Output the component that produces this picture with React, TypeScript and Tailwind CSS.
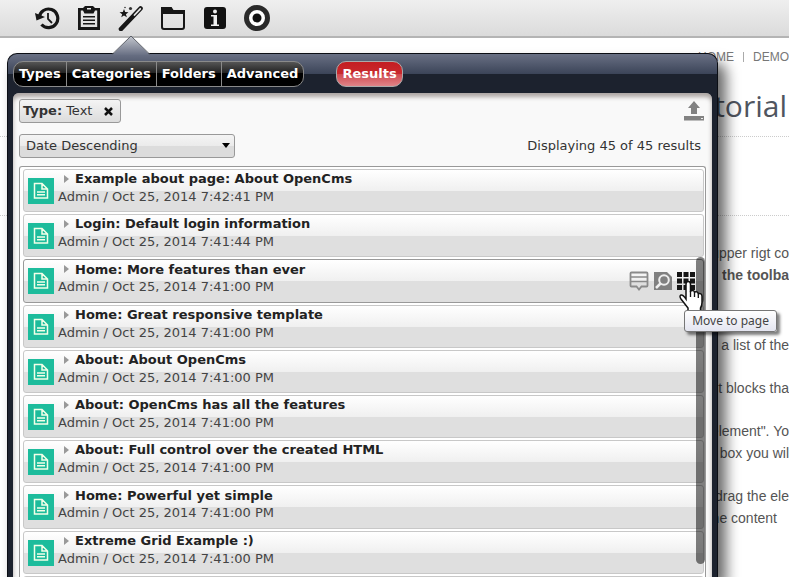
import React from "react";

type Entry = { title: string; date: string; active?: boolean };

const entries: Entry[] = [
  { title: "Example about page: About OpenCms", date: "Oct 25, 2014 7:42:41 PM" },
  { title: "Login: Default login information", date: "Oct 25, 2014 7:41:44 PM" },
  { title: "Home: More features than ever", date: "Oct 25, 2014 7:41:00 PM", active: true },
  { title: "Home: Great responsive template", date: "Oct 25, 2014 7:41:00 PM" },
  { title: "About: About OpenCms", date: "Oct 25, 2014 7:41:00 PM" },
  { title: "About: OpenCms has all the features", date: "Oct 25, 2014 7:41:00 PM" },
  { title: "About: Full control over the created HTML", date: "Oct 25, 2014 7:41:00 PM" },
  { title: "Home: Powerful yet simple", date: "Oct 25, 2014 7:41:00 PM" },
  { title: "Extreme Grid Example :)", date: "Oct 25, 2014 7:41:00 PM" },
];

const toolClass = "flex size-7 items-center justify-center";

function Toolbar() {
  return (
    <header className="flex h-[38px] items-center gap-[14px] border-b-2 border-[#b4b4b4] bg-linear-to-b from-[#efefef] to-[#dbdbdb] pl-[33px]">
      <button aria-label="History" className={toolClass}>
        <svg width="26" height="26" viewBox="0 0 26 26" fill="none" stroke="#171717">
          <path d="M5.2 12.500A9.300 9.300 0 1 1 7.500 19.500" strokeWidth="3.200" />
          <path d="M1 8l1.500 7.500 8.500-3.500z" fill="#171717" stroke="none" />
          <path d="M14 8v6l4 4" strokeWidth="1.800" />
        </svg>
      </button>
      <button aria-label="Clipboard" className={toolClass}>
        <svg width="26" height="26" viewBox="0 0 26 26" fill="#171717">
          <path
            fillRule="evenodd"
            d="M2 3h5l2-2h8l2 2h5v22H2zM4.800 5.500v16.500h16.400V5.500H19L17.500 8.500h-9L7 5.500zM11 3v1.500h4V3z"
          />
          <path d="M7 11h12v1.500H7zM7 14.500h12V16H7zM7 18h12v1.500H7z" />
        </svg>
      </button>
      <button aria-label="Add content" className={toolClass}>
        <svg width="26" height="26" viewBox="0 0 26 26">
          <path d="M3 24L22.500 3.500" stroke="#171717" strokeWidth="4.600" strokeLinecap="round" />
          <path d="M16.500 10L22.300 3.800" stroke="#e4e4e4" strokeWidth="1.800" strokeLinecap="round" />
          <path d="M6 4l1.200 3 3.300.2-2.600 2 1 3.100L6 10.500l-2.800 1.800 1-3.100-2.700-2 3.300-.2z" fill="#171717" />
          <circle cx="12.500" cy="3.500" r="1.600" fill="#333" />
          <circle cx="7" cy="2.500" r=".8" fill="#333" />
        </svg>
      </button>
      <button aria-label="Folders" className={toolClass}>
        <svg width="26" height="26" viewBox="0 0 26 26" fill="none">
          <path d="M2 22V3h9l2 3h11v16q0 2-2 2H4q-2 0-2-2z" stroke="#171717" strokeWidth="2" />
          <path d="M2 2h9l2 4h11v3H2z" fill="#171717" />
        </svg>
      </button>
      <button aria-label="Information" className={toolClass}>
        <svg width="24" height="24" viewBox="0 0 24 24">
          <rect x="1" y="1" width="22" height="22" rx="3" fill="#111" />
          <circle cx="12" cy="5.500" r="2" fill="#eee" />
          <path d="M8 9h6v9.500h2V20H8v-1.500h2.500v-8H8z" fill="#eee" />
        </svg>
      </button>
      <button aria-label="Publish" className={toolClass}>
        <svg width="28" height="28" viewBox="0 0 28 28">
          <circle cx="14" cy="14" r="10.500" fill="#fff" stroke="#2a2a2a" strokeWidth="5" />
          <circle cx="14" cy="14" r="4.500" fill="#111" />
        </svg>
      </button>
    </header>
  );
}

function EntryRow({ entry }: { entry: Entry }) {
  return (
    <li
      className={`mb-[2px] flex rounded-[3px] border bg-[linear-gradient(#fff,#f0f0f0_50%,#dfdfdf_50%,#dfdfdf)] pl-1 ${
        entry.active ? "border-[#999]" : "border-[#c8c8c8]"
      }`}
    >
      <span className="mt-2 flex size-[26px] shrink-0 items-center justify-center bg-[#1dbc9c]">
        <svg width="16" height="18" viewBox="0 0 16 18" fill="none" stroke="#f4ffe8" strokeWidth="1.500">
          <path d="M1.500 1.500h7.500l5.500 5.500v9h-13zM9 1.500V7h5.500M4 10h8M4 12.800h8" />
        </svg>
      </span>
      <div className="min-w-0 grow pl-1">
        <h3 className="flex h-[18px] items-center font-bold text-[#222]">
          <span className="mx-[6px] border-y-4 border-l-[5px] border-y-transparent border-l-[#999]" />
          <span className="whitespace-nowrap">{entry.title}</span>
        </h3>
        <p className="h-[18px] leading-[18px] text-[#444]">Admin / {entry.date}</p>
      </div>
      {entry.active && (
        <div className="mr-2 flex items-center gap-1">
          <button aria-label="Show details">
            <svg width="20" height="20" viewBox="0 0 20 20" fill="none" stroke="#8a8a8a">
              <path d="M2.500 1.500h15q1 0 1 1v12q0 1-1 1h-5L10 18.500l-2.500-3h-5q-1 0-1-1v-12q0-1 1-1z" strokeWidth="1.800" />
              <path d="M2 6h16M2 10.500h16" strokeWidth="1.600" />
            </svg>
          </button>
          <button aria-label="Preview">
            <svg width="20" height="20" viewBox="0 0 20 20">
              <path d="M1 1h13l5 5v13H1z" fill="#808080" />
              <circle cx="11" cy="9" r="4.800" fill="none" stroke="#eee" strokeWidth="2" />
              <path d="M7.500 12.500L3 17" stroke="#eee" strokeWidth="2.500" />
            </svg>
          </button>
          <button aria-label="Move to page">
            <svg width="18" height="18" viewBox="0 0 18 18" fill="#151515">
              <path d="M0 0h5v5H0zM6.500 0h5v5h-5zM13 0h5v5h-5zM0 6.500h5v5H0zM6.500 6.500h5v5h-5zM13 6.500h5v5h-5zM0 13h5v5H0zM6.500 13h5v5h-5zM13 13h5v5h-5z" />
            </svg>
          </button>
        </div>
      )}
    </li>
  );
}

function Gallery() {
  const tab = "border-r border-[#8a8a8a] px-[5px] last:border-r-0";
  return (
    <section className="absolute top-[53px] right-[71px] bottom-0 left-[7px] flex flex-col rounded-t-[10px] border border-b-0 border-[#0b0e14] bg-[linear-gradient(#697084,#3b4458_20px,#1c222e_20px,#1c222e)] px-[5px] text-[13px] shadow-[8px_10px_14px_rgba(0,0,0,0.6)]">
      <svg className="absolute -top-[19px] left-[103px]" width="40" height="20" viewBox="0 0 40 20">
        <path d="M1 20L20 1l19 19z" fill="url(#tip)" />
        <path d="M1 19.500L20 1l19 18.500" fill="none" stroke="#5c6068" />
        <defs>
          <linearGradient id="tip" x1="0" y1="0" x2="0" y2="1">
            <stop stopColor="#c4c7ce" />
            <stop offset="1" stopColor="#697084" />
          </linearGradient>
        </defs>
      </svg>
      <nav className="flex items-center gap-8 pt-[7px] font-bold text-white">
        <div className="flex h-[26px] overflow-hidden rounded-[10px] border border-[#8a8a8a] bg-[linear-gradient(#555,#222_45%,#000_45%)]">
          <button className={tab}>Types</button>
          <button className={tab}>Categories</button>
          <button className={tab}>Folders</button>
          <button className={tab}>Advanced</button>
        </div>
        <button className="h-[26px] rounded-[10px] border border-[#aaa] bg-[linear-gradient(#c41e22,#c8292d_48%,#d04a50_52%,#e08488)] px-[5px]">
          Results
        </button>
      </nav>
      <div className="mt-[6px] flex min-h-0 grow flex-col rounded-t-[6px] bg-[#f9f9f9] px-[6px] pt-[6px] text-[#333] shadow-[inset_0_4px_4px_rgba(120,110,105,0.6)]">
        <div className="flex items-start justify-between">
          <div className="flex h-6 items-center rounded-[3px] border border-[#999] bg-linear-to-b from-[#f4f4f4] to-[#dcdcdc] px-[3px]">
            <b>Type:</b>
            <span className="ml-1">Text</span>
            <button aria-label="Remove filter" className="ml-2 p-1">
              <svg width="9" height="9" viewBox="0 0 9 9" stroke="#111" strokeWidth="2.500">
                <path d="M1 1l7 7M8 1L1 8" />
              </svg>
            </button>
          </div>
          <button aria-label="Upload" className="mr-[2px] mt-[2px]">
            <svg width="20" height="20" viewBox="0 0 20 20" fill="#828282">
              <path d="M10 0l6 7h-3v6H7V7H4zM0 15h20v4.500H0z" />
              <path d="M17 17h2v1h-2z" fill="#eee" />
            </svg>
          </button>
        </div>
        <div className="mt-[11px] flex items-center justify-between">
          <div className="relative">
            <select
              aria-label="Sort order"
              className="block h-6 w-[216px] appearance-none rounded-[3px] border border-[#999] bg-[linear-gradient(#f4f4f4,#ebebeb_50%,#dcdcdc_50%)] px-[6px] text-[13px] leading-[20px]"
            >
              <option>Date Descending</option>
            </select>
            <span className="pointer-events-none absolute top-[9px] right-[5px] border-x-4 border-t-[5px] border-x-transparent border-t-black" />
          </div>
          <span className="mr-[5px]">Displaying 45 of 45 results</span>
        </div>
        <div className="relative mt-2 min-h-0 grow overflow-hidden rounded-t-[3px] border border-b-0 border-[#999] bg-white pt-[2px] pr-px pl-[3px]">
          <ul className="grid h-[452px] auto-rows-fr">
            {entries.map((entry) => (
              <EntryRow key={entry.title} entry={entry} />
            ))}
            <li className="rounded-[3px] border border-[#c8c8c8]" />
          </ul>
          <div className="absolute top-[90px] right-0 h-[307px] w-[9px] rounded-full bg-black/50" />
        </div>
      </div>
    </section>
  );
}

export default function App() {
  return (
    <div className="relative h-screen overflow-hidden bg-white font-['DejaVu_Sans',sans-serif]">
      <Toolbar />
      <main className="whitespace-nowrap text-right font-['Liberation_Sans',sans-serif] text-[14px] leading-[22px] text-[#555]">
        <nav className="flex h-[38px] items-center justify-end text-[12px] text-[#777]">
          <a href="#home">HOME</a>
          <span className="mx-[9px] h-[10px] w-px bg-[#aaa]" />
          <a href="#demo">DEMO</a>
        </nav>
        <h1 className="h-[61px] border-b border-dotted border-[#ccc] pr-[2px] pt-3 font-['Open_Sans',sans-serif] text-[30px] leading-[36px] text-[#50555f]">
          Tutorial
        </h1>
        <div className="h-[79px] border-b border-dotted border-[#ccc]" />
        <p className="mt-[26px]">upper rigt co</p>
        <p className="font-bold">the toolba</p>
        <p className="mt-12">a list of the</p>
        <p className="mt-[21px]">t blocks tha</p>
        <p className="mt-[21px]">element". Yo</p>
        <p>box you wil</p>
        <p className="mt-[21px]">drag the ele</p>
        <p className="pr-3">the content</p>
      </main>
      <Gallery />
      <svg className="absolute top-[280px] right-[85px]" width="26" height="33" viewBox="0 0 26 33">
        <path
          d="M8 16V4q0-2.500 2.200-2.500T12.500 4v7q3-1.500 4 1 3-1 3.800 1.500 3.700-.5 3.700 3v6q0 3-1.500 5.500V31H10v-3L3 19q-2-3 0-4 2-.5 5 4z"
          fill="#fff"
          stroke="#111"
          strokeWidth="1.500"
        />
        <path d="M12.500 11v6M16.500 12v5M20.300 13.500V18" stroke="#111" strokeWidth="1.300" />
      </svg>
      <div
        role="tooltip"
        className="absolute top-[310px] right-[12px] flex h-[22px] items-center rounded-[3px] border border-[#767676] bg-linear-to-b from-white to-[#e4e5f0] px-[7px] font-['Noto_Sans',sans-serif] text-[12px] text-[#444] shadow-[3px_3px_3px_rgba(0,0,0,0.5)]"
      >
        Move to page
      </div>
    </div>
  );
}
